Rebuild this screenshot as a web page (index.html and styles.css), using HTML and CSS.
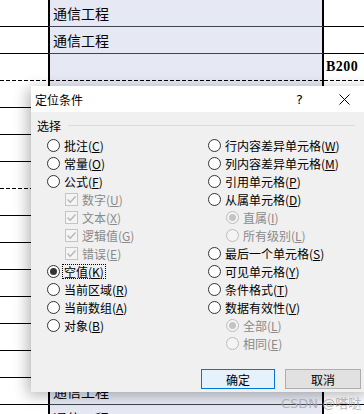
FILE: index.html
```html
<html>
<head>
	<meta charset="utf-8">
	<link rel="stylesheet" href="styles.css">
</head>
<body>
<div class="sheet">
	<div class="row"><div class="a"></div><div class="b">通信工程</div><div class="c"></div></div>
	<div class="row"><div class="a"></div><div class="b">通信工程</div><div class="c"></div></div>
	<div class="row dash"><div class="a"></div><div class="b"></div><div class="c bold">B200</div></div>
	<div class="row"><div class="a"></div><div class="b"></div><div class="c"></div></div>
	<div class="row"><div class="a"></div><div class="b"></div><div class="c"></div></div>
	<div class="row"><div class="a"></div><div class="b"></div><div class="c"></div></div>
	<div class="row dash"><div class="a"></div><div class="b"></div><div class="c"></div></div>
	<div class="row"><div class="a"></div><div class="b"></div><div class="c"></div></div>
	<div class="row"><div class="a"></div><div class="b"></div><div class="c"></div></div>
	<div class="row"><div class="a"></div><div class="b"></div><div class="c"></div></div>
	<div class="row"><div class="a"></div><div class="b"></div><div class="c"></div></div>
	<div class="row"><div class="a"></div><div class="b"></div><div class="c"></div></div>
	<div class="row"><div class="a"></div><div class="b"></div><div class="c"></div></div>
	<div class="row"><div class="a"></div><div class="b"></div><div class="c"></div></div>
	<div class="row"><div class="a"></div><div class="b">通信工程</div><div class="c"></div></div>
	<div class="row"><div class="a"></div><div class="b">通信工程</div><div class="c"></div></div>
</div>

<div class="dialog">
	<div class="titlebar">
		<span class="title">定位条件</span>
		<span class="help">?</span>
		<span class="close">
			<svg width="11" height="11" viewBox="0 0 11 11"><path d="M0.5 0.5 L10.5 10.5 M10.5 0.5 L0.5 10.5" stroke="#000" stroke-width="1" fill="none"/></svg>
		</span>
	</div>
	<div class="body">
		<div class="group-head"><span>选择</span><div class="group-line"></div></div>
		<div class="options">
			<div class="col">
				<div class="opt"><i class="radio"></i>批注(<u>C</u>)</div>
				<div class="opt"><i class="radio"></i>常量(<u>O</u>)</div>
				<div class="opt"><i class="radio"></i>公式(<u>F</u>)</div>
				<div class="opt sub off"><i class="check"><svg width="11" height="11" viewBox="0 0 11 11"><path d="M1.5 5.5 L4.2 8.3 L9.5 2.5" stroke="#b4b4b4" stroke-width="1.3" fill="none"/></svg></i>数字(<u>U</u>)</div>
				<div class="opt sub off"><i class="check"><svg width="11" height="11" viewBox="0 0 11 11"><path d="M1.5 5.5 L4.2 8.3 L9.5 2.5" stroke="#b4b4b4" stroke-width="1.3" fill="none"/></svg></i>文本(<u>X</u>)</div>
				<div class="opt sub off"><i class="check"><svg width="11" height="11" viewBox="0 0 11 11"><path d="M1.5 5.5 L4.2 8.3 L9.5 2.5" stroke="#b4b4b4" stroke-width="1.3" fill="none"/></svg></i>逻辑值(<u>G</u>)</div>
				<div class="opt sub off"><i class="check"><svg width="11" height="11" viewBox="0 0 11 11"><path d="M1.5 5.5 L4.2 8.3 L9.5 2.5" stroke="#b4b4b4" stroke-width="1.3" fill="none"/></svg></i>错误(<u>E</u>)</div>
				<div class="opt"><i class="radio on"></i><span class="focus">空值(<u>K</u>)</span></div>
				<div class="opt"><i class="radio"></i>当前区域(<u>R</u>)</div>
				<div class="opt"><i class="radio"></i>当前数组(<u>A</u>)</div>
				<div class="opt"><i class="radio"></i>对象(<u>B</u>)</div>
			</div>
			<div class="col">
				<div class="opt"><i class="radio"></i>行内容差异单元格(<u>W</u>)</div>
				<div class="opt"><i class="radio"></i>列内容差异单元格(<u>M</u>)</div>
				<div class="opt"><i class="radio"></i>引用单元格(<u>P</u>)</div>
				<div class="opt"><i class="radio"></i>从属单元格(<u>D</u>)</div>
				<div class="opt sub off"><i class="radio on"></i>直属(<u>I</u>)</div>
				<div class="opt sub off"><i class="radio"></i>所有级别(<u>L</u>)</div>
				<div class="opt"><i class="radio"></i>最后一个单元格(<u>S</u>)</div>
				<div class="opt"><i class="radio"></i>可见单元格(<u>Y</u>)</div>
				<div class="opt"><i class="radio"></i>条件格式(<u>T</u>)</div>
				<div class="opt"><i class="radio"></i>数据有效性(<u>V</u>)</div>
				<div class="opt sub off"><i class="radio on"></i>全部(<u>L</u>)</div>
				<div class="opt sub off"><i class="radio"></i>相同(<u>E</u>)</div>
			</div>
		</div>
		<div class="buttons">
			<div class="btn default">确定</div>
			<div class="btn">取消</div>
		</div>
	</div>
</div>

<div class="watermark">CSDN @嗒哒</div>
</body>
</html>
```

FILE: styles.css
```css
body {
	margin: 0;
	width: 364px;
	height: 414px;
	overflow: hidden;
	background: #fff;
	font-family: "Noto Sans CJK SC", "DejaVu Sans", sans-serif;
}

.sheet {
	display: flex;
	flex-direction: column;
}
.row {
	display: flex;
	height: 27px;
	flex-shrink: 0;
}
.row > div {
	box-sizing: border-box;
	border-bottom: 1px solid #000;
	font-size: 14px;
	line-height: 26px;
}
.row .a {
	width: 48px;
}
.row .b {
	width: 276px;
	padding-left: 3px;
	border-left: 2px solid #000;
	border-right: 2px solid #000;
	border-bottom-color: #3e4452;
	background-color: #e6e8f3;
}
.row .c {
	flex: 1;
	padding-left: 2px;
}
.row.dash > div {
	border-bottom: 0;
	background-image: repeating-linear-gradient(to right, #000 0 4px, transparent 4px 6px);
	background-size: 100% 1px;
	background-position: left bottom;
	background-repeat: no-repeat;
}
.bold {
	font-family: "Liberation Serif", serif;
	font-weight: bold;
	font-size: 15px;
	letter-spacing: 0.5px;
}

.dialog {
	position: absolute;
	left: 31px;
	top: 86px;
	width: 340px;
	height: 306px;
	background: #f0f0f0;
	box-shadow: -3px 3px 14px rgba(0, 0, 0, 0.3);
	font-size: 12px;
	color: #000;
}
.titlebar {
	height: 26px;
	background: #fff;
	display: flex;
	align-items: center;
}
.title {
	padding-left: 4px;
	font-size: 12px;
}
.help {
	margin-left: auto;
	font-family: "DejaVu Sans", sans-serif;
	font-size: 13px;
	margin-right: 36px;
}
.close {
	display: flex;
	margin-right: 21px;
}

.body {
	padding-top: 4px;
}
.group-head {
	display: flex;
	align-items: center;
	height: 18px;
	padding-left: 6px;
}
.group-line {
	flex: 1;
	height: 1px;
	background: #dcdcdc;
	margin-left: 7px;
	margin-right: 16px;
}
.options {
	display: grid;
	grid-template-columns: 161px 1fr;
	padding-left: 16px;
	margin-top: 2px;
}
.opt {
	display: flex;
	align-items: center;
	height: 18px;
	white-space: nowrap;
}
.opt u {
	text-decoration: underline;
	text-underline-offset: 1px;
}
.opt.sub {
	padding-left: 18px;
}
.opt.off {
	color: #8a8a8a;
}
.radio {
	box-sizing: border-box;
	width: 13px;
	height: 13px;
	border: 1px solid #333;
	border-radius: 50%;
	background: #fff;
	margin-right: 4px;
	display: flex;
	align-items: center;
	justify-content: center;
}
.radio.on::after {
	content: "";
	width: 7px;
	height: 7px;
	border-radius: 50%;
	background: #333;
}
.off .radio {
	border-color: #bcbcbc;
	background: #f4f4f4;
}
.off .radio.on::after {
	background: #c4c4c4;
}
.check {
	box-sizing: border-box;
	width: 13px;
	height: 13px;
	border: 1px solid #c4c4c4;
	background: #f4f4f4;
	margin-right: 4px;
	display: flex;
	align-items: center;
	justify-content: center;
}
.focus {
	outline: 1px dotted #000;
	line-height: 13px;
	padding: 0 1px;
	margin-left: -1px;
}

.buttons {
	display: flex;
	gap: 10px;
	padding-left: 170px;
	margin-top: 17px;
}
.btn {
	box-sizing: border-box;
	width: 76px;
	height: 20px;
	border: 1px solid #adadad;
	background: #e1e1e1;
	display: flex;
	align-items: center;
	justify-content: center;
	font-size: 12px;
}
.btn.default {
	width: 74px;
	border-color: #0078d7;
	background: #e5f1fb;
}

.watermark {
	position: absolute;
	left: 281px;
	top: 393px;
	font-family: "DejaVu Sans", "Noto Sans CJK SC", sans-serif;
	font-size: 13px;
	color: rgba(165, 165, 165, 0.8);
}
```
